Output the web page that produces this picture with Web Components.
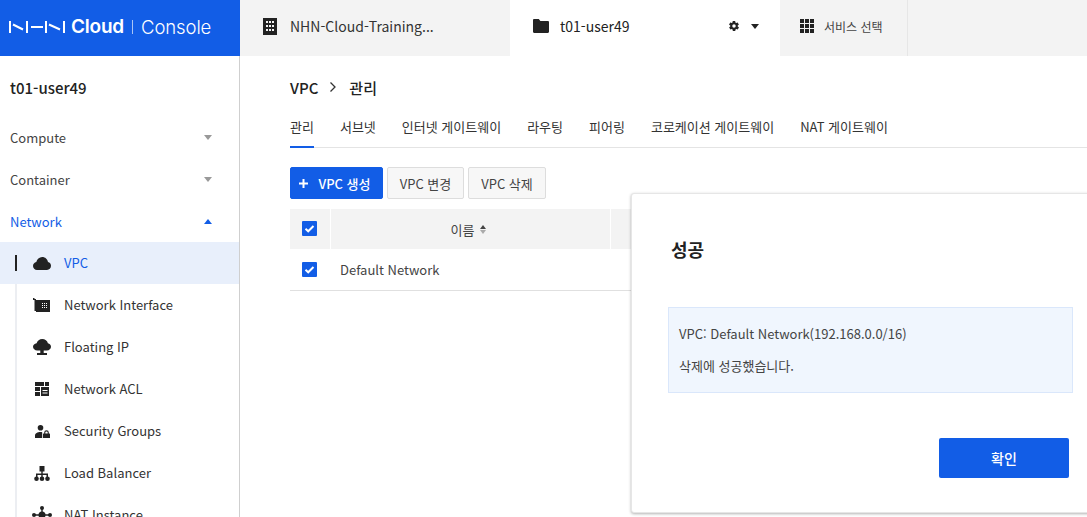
<!DOCTYPE html>
<html lang="ko">
<head>
<meta charset="utf-8">
<title>NHN Cloud Console</title>
<style>
html, body { margin: 0; padding: 0; height: 100%; overflow: hidden; background: #fff; }
body { font: 13px "Noto Sans CJK KR", "Noto Sans", sans-serif; color: #333; }
</style>
</head>
<body>
<console-app></console-app>

<script>
const ICONS = {
    building: '<svg width="14" height="17" viewBox="0 0 14 17"><path fill="#222" fill-rule="evenodd" d="M0 0h14v17H0zM3 3v2h2V3zm3 0v2h2V3zm3 0v2h2V3zM3 7v2h2V7zm3 0v2h2V7zm3 0v2h2V7zM3 11v2h2v-2zm3 0v2h2v-2zm3 0v2h2v-2z"/></svg>',
    folder: '<svg width="16" height="14" viewBox="0 0 16 14"><path fill="#222" d="M0 1.200C0 .5.5 0 1.200 0h4.600l1.600 2h7.400c.7 0 1.200.5 1.200 1.200v9.600c0 .7-.5 1.200-1.200 1.200H1.200C.5 14 0 13.500 0 12.800z"/></svg>',
    gear: '<svg width="12" height="12" viewBox="0 0 24 24"><path fill="#222" d="M19.400 13c.1-.3.1-.7.1-1s0-.7-.1-1l2.100-1.600c.2-.2.2-.4.1-.6l-2-3.500c-.1-.2-.4-.3-.6-.2l-2.500 1c-.5-.4-1.100-.7-1.700-1l-.4-2.600c0-.3-.2-.5-.5-.5h-4c-.3 0-.5.2-.5.400l-.4 2.700c-.6.2-1.100.6-1.700 1l-2.500-1c-.2-.1-.5 0-.6.2l-2 3.500c-.1.2-.1.5.1.6L4.600 11c-.1.3-.1.7-.1 1s0 .7.1 1l-2.100 1.600c-.2.2-.2.4-.1.6l2 3.500c.1.2.4.3.6.2l2.500-1c.5.4 1.100.7 1.700 1l.4 2.600c0 .3.2.5.5.5h4c.3 0 .5-.2.5-.4l.4-2.700c.6-.2 1.100-.6 1.700-1l2.500 1c.2.1.5 0 .6-.2l2-3.500c.1-.2.1-.5-.1-.6zM12 15.500a3.500 3.500 0 1 1 0-7 3.500 3.500 0 0 1 0 7z"/></svg>',
    grid: '<svg width="14" height="14" viewBox="0 0 14 14"><path fill="#222" d="M0 0h4v4H0zM5 0h4v4H5zM10 0h4v4h-4zM0 5h4v4H0zM5 5h4v4H5zM10 5h4v4h-4zM0 10h4v4H0zM5 10h4v4H5zM10 10h4v4h-4z"/></svg>',
    cloud: '<svg width="18" height="13" viewBox="0 0 18 13"><path fill="#222" d="M4 13C1.800 13 0 11.200 0 9c0-1.900 1.400-3.500 3.300-3.900C4 2.200 6.300 0 9.200 0c3 0 5.300 2.200 5.800 5 1.800.3 3 1.900 3 3.800 0 2.300-1.800 4.200-4 4.200z"/></svg>',
    nic: '<svg width="18" height="14" viewBox="0 0 18 14"><path fill="#222" fill-rule="evenodd" d="M0 0h1.500v1H3v12H1.500V2H0zM3 2h14v12H3zM9 5v1h1V5zm2 0v1h1V5zm2 0v1h1V5zM9 7v1h1V7zm2 0v1h1V7zm2 0v1h1V7zM9 9v1h1V9zm2 0v1h1V9zm2 0v1h1V9z"/></svg>',
    tree: '<svg width="18" height="16" viewBox="0 0 18 16"><path fill="#222" d="M4.200 11.500C1.900 11.500 0 9.800 0 7.800c0-1.900 1.500-3.400 3.600-3.600C4.400 1.700 6.500 0 9.200 0c2.800 0 5.200 1.800 5.700 4.300 1.800.4 3.100 1.800 3.100 3.500 0 2-1.800 3.700-4 3.700h-3.300V14H14v2H4v-2h3.300v-2.500z"/></svg>',
    acl: '<svg width="14" height="14" viewBox="0 0 14 14"><path fill="#222" fill-rule="evenodd" d="M0 0h9v4H0zM10 0h4v4h-4zM0 5h5v4H0zM0 10h5v4H0zM6 5h8v9H6zm1.500 3v1H12.500V8zm0 2.500v1H12.500v-1z"/></svg>',
    secgroup: '<svg width="15" height="13" viewBox="0 0 15 13"><circle cx="5.500" cy="2.800" r="2.800" fill="#222"/><path fill="#222" d="M0 13v-2.500C0 8.500 2.500 7 5.500 7c.6 0 1.100.1 1.700.2V13z"/><path fill="#222" fill-rule="evenodd" d="M8.500 8.500h.7V7.600a2.300 2.300 0 0 1 4.600 0v.9h.7c.3 0 .5.2.5.5V13H8V9c0-.3.2-.5.5-.5zM10.300 8.500h2.400V7.600a1.200 1.200 0 0 0-2.400 0z"/></svg>',
    lb: '<svg width="16" height="15" viewBox="0 0 16 15"><path fill="#222" d="M5.500 0h5v5.500H8.700V7.500h5.300V11h-1.500V9H8.700v2H7.300V9H3.500v2H2V7.500h5.300V5.500H5.500z"/><circle cx="2.500" cy="12.700" r="2.300" fill="#222"/><circle cx="8" cy="12.700" r="2.300" fill="#222"/><circle cx="13.500" cy="12.700" r="2.300" fill="#222"/></svg>',
    nat: '<svg width="20" height="18" viewBox="0 0 20 18"><g fill="#222"><circle cx="10" cy="9" r="3.500"/><circle cx="10" cy="2" r="2"/><circle cx="2" cy="9" r="2"/><circle cx="18" cy="9" r="2"/><circle cx="10" cy="16" r="2"/><path d="M9.300 2h1.400v14H9.300zM2 8.300h16v1.400H2z"/></g></svg>'
};

function define(name, styles, markup, attrs = []) {
    const tpl = document.createElement('template');
    tpl.innerHTML = `<style>${styles}</style>${markup}`;
    customElements.define(name, class extends HTMLElement {
        constructor() {
            super();
            this.attachShadow({ mode: 'open' }).appendChild(tpl.content.cloneNode(true));
        }
        connectedCallback() {
            attrs.forEach(a => {
                const el = this.shadowRoot.querySelector(`[data-${a}]`);
                if (el && this.hasAttribute(a)) el.innerHTML = ICONS[this.getAttribute(a)];
            });
        }
    });
}

define('top-tab', `
    :host { display: flex; align-items: center; box-sizing: border-box; height: 56px; padding-bottom: 4px; background: #f3f3f3; flex: none; }
    :host([active]) { background: #fff; }
    .icon { display: flex; flex: none; }
    .label { flex: 1; white-space: nowrap; font-size: 14px; color: #333; }
    :host([active]) .label { color: #222; }
`, `<span class="icon" data-icon></span><span class="label"><slot></slot></span><slot name="end"></slot>`, ['icon']);

define('console-header', `
    :host { display: flex; height: 56px; background: #f3f3f3; flex: none; }
    .logo { width: 240px; flex: none; background: #125de6; display: flex; align-items: center; padding: 0 0 3px 9px; box-sizing: border-box; color: #fff; white-space: nowrap; }
    .logo svg { display: block; flex: none; }
    .cloud { font: 600 19px Inter, sans-serif; margin-left: 6px; letter-spacing: -.2px; }
    .sep { width: 1px; height: 14px; background: #a9c4f5; margin: 0 8px 0 8px; flex: none; }
    .console { font: 300 18.500px Inter, sans-serif; letter-spacing: -.1px; }
    .t1 { width: 270px; padding-left: 23px; gap: 13px; }
    .t2 { width: 270px; padding-left: 23px; gap: 11px; }
    .t3 { width: 128px; padding-left: 20px; gap: 10px; border-right: 1px solid #e6e6e6; }
    .tools { display: flex; align-items: center; gap: 11px; padding-right: 21px; }
    .tools span { display: flex; }
    .caret { width: 0; height: 0; border: 4.500px solid transparent; border-top: 5px solid #222; border-bottom: 0; }
    .small { font-size: 12px; color: #444; }
`, `
    <div class="logo">
        <svg width="56" height="12" viewBox="0 0 56 12" fill="none" stroke="#fff" stroke-width="2">
            <path d="M1 0v12M4 3.500l10 5M18 0v12M22 6h12M37 0v12M40 3.500l11 5M55 0v12"/>
        </svg>
        <span class="cloud">Cloud</span><span class="sep"></span><span class="console">Console</span>
    </div>
    <top-tab class="t1" icon="building">NHN-Cloud-Training...</top-tab>
    <top-tab class="t2" active icon="folder">t01-user49
        <span slot="end" class="tools"><span data-gear></span><span class="caret"></span></span>
    </top-tab>
    <top-tab class="t3" icon="grid"><span class="small">서비스 선택</span></top-tab>
`);

define('nav-group', `
    :host { display: flex; align-items: center; justify-content: space-between; height: 42px; padding: 0 27px 0 10px; font-size: 13px; color: #444; }
    :host([open]) { color: #125de6; }
    i { width: 0; height: 0; border: 4.500px solid transparent; border-top: 5px solid #999; border-bottom: 0; }
    :host([open]) i { border-top: 0; border-bottom: 5px solid #125de6; }
`, `<slot></slot><i></i>`);

define('nav-item', `
    :host { display: flex; align-items: center; height: 42px; font-size: 13px; color: #333; position: relative; }
    :host([active]) { background: #e8effb; color: #125de6; }
    :host([active])::before { content: ""; position: absolute; left: 15px; top: 13px; width: 2px; height: 16px; background: #222; }
    .icon { width: 20px; margin-left: 32px; margin-right: 12px; display: flex; justify-content: center; flex: none; }
    .text { position: relative; top: -1px; }
`, `<span class="icon" data-icon></span><span class="text"><slot></slot></span>`, ['icon']);

define('console-sidebar', `
    :host { display: block; width: 240px; flex: none; box-sizing: border-box; border-right: 1px solid #cfcfcf; overflow: hidden; }
    h2 { margin: 0; padding: 22px 0 0 10px; height: 60px; box-sizing: border-box; font-size: 15px; font-weight: 500; line-height: 20px; color: #222; }
    .tree { position: relative; }
    .tree::before { content: ""; position: absolute; left: 15px; top: 0; bottom: 0; width: 2px; background: #eceef2; }
`, `
    <h2>t01-user49</h2>
    <nav-group>Compute</nav-group>
    <nav-group>Container</nav-group>
    <nav-group open>Network</nav-group>
    <div class="tree">
        <nav-item active icon="cloud">VPC</nav-item>
        <nav-item icon="nic">Network Interface</nav-item>
        <nav-item icon="tree">Floating IP</nav-item>
        <nav-item icon="acl">Network ACL</nav-item>
        <nav-item icon="secgroup">Security Groups</nav-item>
        <nav-item icon="lb">Load Balancer</nav-item>
        <nav-item icon="nat">NAT Instance</nav-item>
    </div>
`);

define('ui-button', `
    :host { display: inline-flex; align-items: center; justify-content: center; height: 32px; box-sizing: border-box; border: 1px solid #ddd; border-radius: 2px; background: #f7f7f7; font-size: 13px; color: #444; white-space: nowrap; }
    :host([primary]) { background: #125de6; border-color: #125de6; color: #fff; font-weight: 500; padding-right: 3px; }
`, `<slot></slot>`);

define('ui-check', `
    :host { display: block; width: 15px; height: 15px; background: #125de6; border-radius: 1px; }
    svg { display: block; }
`, `<svg width="15" height="15" viewBox="0 0 15 15"><path d="M3.500 7.800l2.700 2.500 5.300-5.300" fill="none" stroke="#fff" stroke-width="2"/></svg>`);

define('vpc-page', `
    :host { display: block; flex: 1; min-width: 0; padding: 0 0 0 50px; overflow: hidden; }
    .crumb { display: flex; align-items: center; height: 20px; margin-top: 21px; font-size: 15px; font-weight: 500; color: #222; }
    .crumb svg { margin: 0 12px 0 11px; }
    .tabs { display: flex; gap: 26px; height: 29px; margin-top: 21px; border-bottom: 1px solid #e4e4e4; font-size: 13px; color: #333; }
    .tabs span { display: block; line-height: 18px; height: 29px; white-space: nowrap; }
    .tabs .on { border-bottom: 2px solid #125de6; height: 28px; position: relative; }
    .bar { display: flex; gap: 4px; margin-top: 19px; }
    .table { margin-top: 10px; }
    .head, .row { display: flex; align-items: center; }
    .head { height: 40px; gap: 1px; }
    .head > div { background: #f3f3f3; height: 40px; display: flex; align-items: center; color: #444; font-size: 13px; }
    .head .c1 { padding-bottom: 1px; }
    .c1 { width: 40px; flex: none; padding-left: 12px; box-sizing: border-box; }
    .c2 { width: 279px; flex: none; gap: 6px; justify-content: center; padding-right: 4px; box-sizing: border-box; }
    .c3 { flex: 1; }
    .row { height: 41px; border-bottom: 1px solid #e0e0e0; color: #444; }
    .row .name { padding-left: 10px; }
    .sort { display: inline-flex; flex-direction: column; gap: 1px; }
    .sort i { width: 0; height: 0; border: 3.500px solid transparent; }
    .sort i:first-child { border-top: 0; border-bottom: 4px solid #444; }
    .sort i:last-child { border-bottom: 0; border-top: 4px solid #aaa; }
`, `
    <div class="crumb">VPC
        <svg width="8" height="12" viewBox="0 0 8 12"><path d="M1.500 1.500L6 6l-4.500 4.500" fill="none" stroke="#333" stroke-width="1.300"/></svg>관리</div>
    <div class="tabs">
        <span class="on">관리</span><span>서브넷</span><span>인터넷 게이트웨이</span><span>라우팅</span><span>피어링</span><span>코로케이션 게이트웨이</span><span>NAT 게이트웨이</span>
    </div>
    <div class="bar">
        <ui-button primary style="width:93px"><svg width="9" height="9" viewBox="0 0 9 9" style="margin-right:10px"><path d="M4.500 0v9M0 4.500h9" stroke="#fff" stroke-width="2"/></svg>VPC 생성</ui-button>
        <ui-button style="width:77px">VPC 변경</ui-button>
        <ui-button style="width:78px">VPC 삭제</ui-button>
    </div>
    <div class="table">
        <div class="head">
            <div class="c1"><ui-check></ui-check></div>
            <div class="c2">이름 <span class="sort"><i></i><i></i></span></div>
            <div class="c3"></div>
        </div>
        <div class="row">
            <div class="c1"><ui-check></ui-check></div>
            <div class="name">Default Network</div>
        </div>
    </div>
`);

define('success-dialog', `
    :host { position: absolute; left: 631px; top: 193px; width: 520px; height: 320px; box-sizing: border-box; background: #fff; border-radius: 3px; border: 1px solid #e6e6e6; box-shadow: 0 1px 3px rgba(0,0,0,.3); padding: 42px 0 0 36px; }
    h3 { margin: 0 0 0 3px; font-size: 18px; line-height: 26px; font-weight: 700; color: #222; }
    .alert { box-sizing: border-box; width: 405px; height: 86px; margin-top: 45px; background: #f0f6fe; border: 1px solid #dae7fb; padding: 16px 10px 0; font-size: 13px; line-height: 20px; color: #444; }
    .alert p { margin: 0 0 12px; }
    .foot { width: 401px; display: flex; justify-content: flex-end; margin-top: 45px; }
    button { width: 130px; height: 40px; border: 0; padding: 0; border-radius: 2px; background: #125de6; color: #fff; font: 500 14px "Noto Sans CJK KR", sans-serif; }
`, `
    <h3>성공</h3>
    <div class="alert"><p>VPC: Default Network(192.168.0.0/16)</p><p>삭제에 성공했습니다.</p></div>
    <div class="foot"><button>확인</button></div>
`);

define('console-app', `
    :host { display: flex; flex-direction: column; height: 517px; overflow: hidden; position: relative; }
    .main { display: flex; flex: 1; min-height: 0; }
`, `
    <console-header></console-header>
    <div class="main">
        <console-sidebar></console-sidebar>
        <vpc-page></vpc-page>
    </div>
    <success-dialog></success-dialog>
`);

// gear sits in the folder tab
document.querySelector('console-app').shadowRoot
    .querySelector('console-header').shadowRoot
    .querySelector('[data-gear]').innerHTML = ICONS.gear;
</script>
</body>
</html>
